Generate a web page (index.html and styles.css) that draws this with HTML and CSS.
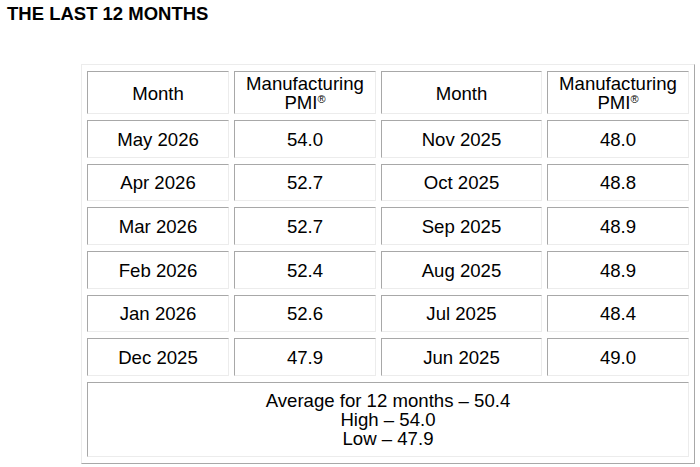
FILE: index.html
```html
<!DOCTYPE html>
<html>
<head>
<meta charset="utf-8">
<link rel="stylesheet" href="styles.css">
</head>
<body>
<h1 class="title">THE LAST 12 MONTHS</h1>
<table class="pmi">
  <colgroup>
    <col class="c1"><col class="c2"><col class="c3"><col class="c4">
  </colgroup>
  <tr class="head">
    <td>Month</td><td>Manufacturing<br>PMI<sup>®</sup></td>
    <td>Month</td><td>Manufacturing<br>PMI<sup>®</sup></td>
  </tr>
  <tr class="row"><td>May 2026</td><td>54.0</td><td>Nov 2025</td><td>48.0</td></tr>
  <tr class="row"><td>Apr 2026</td><td>52.7</td><td>Oct 2025</td><td>48.8</td></tr>
  <tr class="row"><td>Mar 2026</td><td>52.7</td><td>Sep 2025</td><td>48.9</td></tr>
  <tr class="row"><td>Feb 2026</td><td>52.4</td><td>Aug 2025</td><td>48.9</td></tr>
  <tr class="row"><td>Jan 2026</td><td>52.6</td><td>Jul 2025</td><td>48.4</td></tr>
  <tr class="row"><td>Dec 2025</td><td>47.9</td><td>Jun 2025</td><td>49.0</td></tr>
  <tr class="foot">
    <td colspan="4">Average for 12 months – 50.4<br>High – 54.0<br>Low – 47.9</td>
  </tr>
</table>
</body>
</html>
```
FILE: styles.css
```css
html, body {
  margin: 0;
  padding: 0;
  background: #fff;
}
body {
  padding: 3px 7px;
  font-family: "Liberation Sans", Arial, sans-serif;
  color: #000;
}
.title {
  margin: 0;
  font-size: 18.5px;
  line-height: 21px;
  font-weight: bold;
}
.pmi {
  margin: 40px 0 0 74px;
  border-collapse: separate;
  border-spacing: 5px 6px;
  border: 1px solid;
  border-color: #ececec #a8a8a8 #a8a8a8 #ececec;
  table-layout: fixed;
  width: 614px;
  font-size: 18.6px;
  line-height: 19px;
}
.c1, .c2, .c4 { width: 142px; }
.c3 { width: 161px; }
.pmi td {
  border: 1px solid;
  border-color: #a8a8a8 #ececec #ececec #a8a8a8;
  text-align: center;
  vertical-align: middle;
  padding: 1px 1px 0;
}
.head td {
  height: 40px;
}
.row td {
  height: 34.67px;
}
.foot td {
  height: 72px;
}
sup {
  font-size: 11px;
  line-height: 0;
  vertical-align: 6px;
}
```
